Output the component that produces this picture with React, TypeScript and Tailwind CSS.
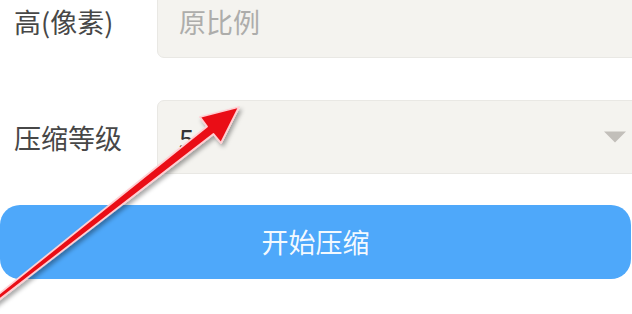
import React from 'react';

const font = { fontFamily: '"Noto Sans CJK SC", "Noto Sans", sans-serif' };

const Row: React.FC<{ label: string; children: React.ReactNode }> = ({ label, children }) => (
  <div className="flex items-center h-[74px]">
    <div className="w-[157px] pl-[14px] text-[27px] text-[#474747] leading-none">{label}</div>
    <div className="flex-1 -mr-6 h-full flex items-center bg-[#f4f3ef] border border-[#e9e8e4] rounded-[7px] pl-[21px] relative">
      {children}
    </div>
  </div>
);

const Arrow = () => (
  <svg className="absolute inset-0 pointer-events-none" width="632" height="314" viewBox="0 0 632 314">
    <defs>
      <filter id="sh" x="-10%" y="-10%" width="120%" height="120%">
        <feDropShadow dx="2" dy="3" stdDeviation="2" floodColor="#000" floodOpacity="0.35" />
      </filter>
    </defs>
    <polygon
      points="239,107 200,117 207,126.5 -11,302 -9,306 213.5,134 221,143"
      fill="#ea1018"
      stroke="#ffd0d4"
      strokeWidth="1.8"
      strokeLinejoin="round"
      filter="url(#sh)"
    />
  </svg>
);

export default function App() {
  return (
    <div className="relative w-[632px] h-[314px] overflow-hidden bg-white" style={font}>
      <div className="-mt-4 flex flex-col">
        <Row label="高(像素)">
          <span className="text-[27px] text-[#adadab] leading-none">原比例</span>
        </Row>
        <div className="h-[42px]" />
        <Row label="压缩等级">
          <span className="text-[27px] text-[#333] leading-none">5</span>
          <span className="absolute right-[29px] top-1/2 -translate-y-1/2 w-0 h-0 border-l-[11px] border-r-[11px] border-t-[11px] border-l-transparent border-r-transparent border-t-[#c2bfba]" />
        </Row>
        <div className="h-[31px]" />
        <button className="h-[74px] w-[631px] rounded-[20px] bg-[#4ea8fa] text-white/95 text-[27px] flex items-center justify-center">
          开始压缩
        </button>
      </div>
      <Arrow />
    </div>
  );
}
